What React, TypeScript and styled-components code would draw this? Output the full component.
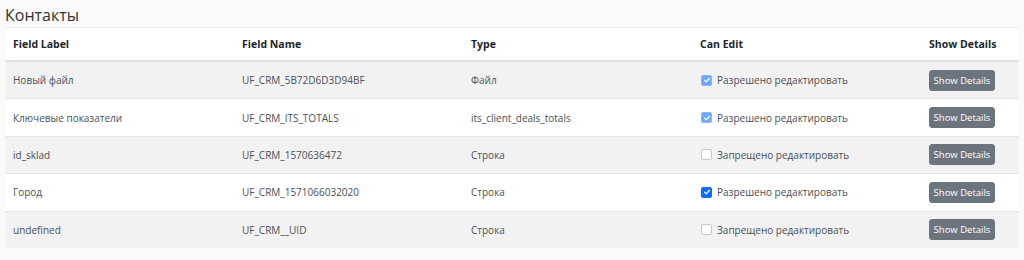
import React from 'react';
import styled, { createGlobalStyle } from 'styled-components';

const GlobalStyle = createGlobalStyle`
  body {
    margin: 0;
    background: #fafafa;
    font-family: "Open Sans", "Noto Sans", sans-serif;
    color: #212529;
  }
`;

type Field = {
  label: string;
  name: string;
  type: string;
  editable: boolean;
  locked: boolean;
};

const fields: Field[] = [
  { label: 'Новый файл', name: 'UF_CRM_5B72D6D3D94BF', type: 'Файл', editable: true, locked: true },
  { label: 'Ключевые показатели', name: 'UF_CRM_ITS_TOTALS', type: 'its_client_deals_totals', editable: true, locked: true },
  { label: 'id_sklad', name: 'UF_CRM_1570636472', type: 'Строка', editable: false, locked: false },
  { label: 'Город', name: 'UF_CRM_1571066032020', type: 'Строка', editable: true, locked: false },
  { label: 'undefined', name: 'UF_CRM__UID', type: 'Строка', editable: false, locked: false },
];

const App: React.FC = () => {
  return (
    <Page>
      <GlobalStyle />
      <Title>Контакты</Title>
      <Table>
        <colgroup>
          <col />
          <col />
          <col />
          <col />
          <LastCol />
        </colgroup>
        <thead>
          <tr>
            <Th>Field Label</Th>
            <Th>Field Name</Th>
            <Th>Type</Th>
            <Th>Can Edit</Th>
            <Th>Show Details</Th>
          </tr>
        </thead>
        <tbody>
          {fields.map((f, i) => (
            <Row key={f.name} $striped={i % 2 === 0}>
              <Td>{f.label}</Td>
              <Td>{f.name}</Td>
              <Td>{f.type}</Td>
              <Td>
                <CheckLabel>
                  <Check $checked={f.editable} $locked={f.locked}>
                    {f.editable && (
                      <svg width="8" height="8" viewBox="0 0 10 10">
                        <path d="M2 5.2 L4.2 7.3 L8 2.8" fill="none" stroke="#fff" strokeWidth="1.6" strokeLinecap="round" strokeLinejoin="round" />
                      </svg>
                    )}
                  </Check>
                  {f.editable ? 'Разрешено редактировать' : 'Запрещено редактировать'}
                </CheckLabel>
              </Td>
              <Td>
                <Button>Show Details</Button>
              </Td>
            </Row>
          ))}
        </tbody>
      </Table>
    </Page>
  );
};

export default App;

const Page = styled.div`
  padding: 0 5px;
`;

const Title = styled.h4`
  margin: 0;
  padding-top: 4px;
  height: 23px;
  font-size: 16px;
  font-weight: 500;
  color: #333;
  line-height: 22px;
`;

const Table = styled.table`
  width: 100%;
  border-collapse: collapse;
  table-layout: fixed;
  font-size: 10px;
  border-top: 1px solid #e9ecef;
`;

const LastCol = styled.col`
  width: 98px;
`;

const Th = styled.th`
  text-align: left;
  font-weight: 700;
  font-size: 10.5px;
  height: 32px;
  padding: 0 8px;
  color: #212529;
  border-bottom: 2px solid #dee2e6;
  background: #fff;
  white-space: nowrap;
`;

const Row = styled.tr<{ $striped: boolean }>`
  background: ${p => (p.$striped ? '#f2f2f2' : '#fff')};
`;

const Td = styled.td`
  height: 36.4px;
  padding: 0 8px;
  color: #495057;
  border-top: 1px solid #e4e6e8;
  vertical-align: middle;
`;

const CheckLabel = styled.label`
  display: flex;
  align-items: center;
  gap: 5px;
  margin-left: 1px;
`;

const Check = styled.span<{ $checked: boolean; $locked: boolean }>`
  display: inline-flex;
  align-items: center;
  justify-content: center;
  width: 11px;
  height: 11px;
  border-radius: 2px;
  box-sizing: border-box;
  border: 1px solid ${p => (p.$checked ? (p.$locked ? '#86b7fe' : '#0d6efd') : '#c4c8cc')};
  background: ${p => (p.$checked ? (p.$locked ? '#6ea8fe' : '#0d6efd') : '#fff')};
`;

const Button = styled.button`
  font-family: "Open Sans", "Noto Sans", sans-serif;
  font-size: 9.5px;
  color: #fff;
  background: #6c757d;
  border: 1px solid #6c757d;
  border-radius: 3px;
  padding: 0 3px;
  width: 66px;
  height: 21px;
  white-space: nowrap;
  cursor: pointer;
`;
